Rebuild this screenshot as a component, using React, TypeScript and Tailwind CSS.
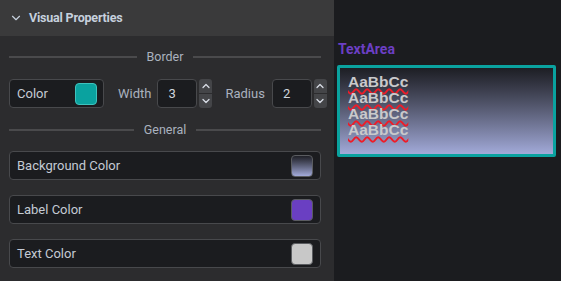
import { ChevronDown, ChevronUp } from "lucide-react";

function Divider({ label }: { label: string }) {
  return (
    <div className="flex items-center gap-[10px] h-[14px]">
      <div className="flex-1 h-[2px] bg-[#4a4a4c]" />
      <span className="text-[12.5px] text-[#aab2bf] leading-none">{label}</span>
      <div className="flex-1 h-[2px] bg-[#4a4a4c]" />
    </div>
  );
}

function Spinner() {
  return (
    <div className="flex flex-col gap-[1px] w-[13px] h-[29px] ml-[2px] shrink-0">
      <div className="flex-1 flex items-center justify-center bg-[#444548] rounded-t-[3px] text-[#d8dde6]">
        <ChevronUp size={12} strokeWidth={2.5} />
      </div>
      <div className="flex-1 flex items-center justify-center bg-[#444548] rounded-b-[3px] text-[#d8dde6]">
        <ChevronDown size={12} strokeWidth={2.5} />
      </div>
    </div>
  );
}

function NumberField({ value }: { value: string }) {
  return (
    <div className="flex shrink-0">
      <div className="w-[40px] h-[29px] bg-[#1b1c1f] border border-[#48494c] rounded-[4px] flex items-center pl-[10px] text-[13px] text-[#d0d6de]">
        {value}
      </div>
      <Spinner />
    </div>
  );
}

function ColorRow({ label, swatch }: { label: string; swatch: string }) {
  return (
    <div className="h-[29px] bg-[#1b1c1f] border border-[#48494c] rounded-[4px] flex items-center justify-between pl-[7px] pr-[7px]">
      <span className="text-[13px] text-[#c4cad4]">{label}</span>
      <div className={`w-[22px] h-[22px] rounded-[4px] border border-[#5a5c60] ${swatch}`} />
    </div>
  );
}

export default function App() {
  return (
    <div className="w-[561px] h-[281px] flex bg-[#1b1c1f] overflow-hidden" style={{ fontFamily: "Roboto, 'Liberation Sans', sans-serif" }}>
      <div className="w-[334px] shrink-0 h-full flex flex-col bg-[#2c2c2e]">
        <div className="h-[36px] shrink-0 bg-[#3a3a3b] flex items-center pl-[9px] gap-[6px] text-[#c6d0dd]">
          <ChevronDown size={14} strokeWidth={2} />
          <span className="text-[12.5px] font-bold tracking-[-0.2px]">Visual Properties</span>
        </div>
        <div className="pl-[9px] pr-[13px]">
          <div className="mt-[14px]">
            <Divider label="Border" />
          </div>
          <div className="mt-[15px] flex items-center">
            <div className="w-[95px] shrink-0 h-[29px] bg-[#1b1c1f] border border-[#48494c] rounded-[4px] flex items-center justify-between pl-[7px] pr-[6px]">
              <span className="text-[13px] text-[#c4cad4]">Color</span>
              <div className="w-[22px] h-[22px] rounded-[4px] bg-[#0aa29f] border border-[#3fc2bd]" />
            </div>
            <span className="ml-[14px] mr-[6px] text-[13px] text-[#aab2bf]">Width</span>
            <NumberField value="3" />
            <span className="ml-[13px] mr-[7px] text-[13px] text-[#aab2bf]">Radius</span>
            <NumberField value="2" />
          </div>
          <div className="mt-[15px]">
            <Divider label="General" />
          </div>
          <div className="mt-[14px] flex flex-col gap-[15px]">
            <ColorRow label="Background Color" swatch="bg-gradient-to-b from-[#202128] to-[#a3abdb]" />
            <ColorRow label="Label Color" swatch="bg-[#6a3fc2]" />
            <ColorRow label="Text Color" swatch="bg-[#c8c8c8]" />
          </div>
        </div>
      </div>
      <div className="flex-1 pl-[3px] pr-[5px] pt-[39px]">
        <div className="text-[14px] font-bold text-[#6c3fc4] pl-[1px]">TextArea</div>
        <div
          className="mt-[5px] h-[92px] border-[3px] border-[#0aa29f] rounded-[2px] bg-gradient-to-b from-[#1d1e24] to-[#a2aad9] pl-[8px] pt-[6px]"
          style={{ fontFamily: "'Liberation Sans', Arial, sans-serif" }}
        >
          {["AaBbCc", "AaBbCc", "AaBbCc", "AaBbCc"].map((t, i) => (
            <div
              key={i}
              className="text-[15.5px] font-bold leading-[16px] text-[#c9c9cb] underline decoration-wavy decoration-[#ee1c28] decoration-[1.5px] underline-offset-[1px]"
            >
              {t}
            </div>
          ))}
        </div>
      </div>
    </div>
  );
}
